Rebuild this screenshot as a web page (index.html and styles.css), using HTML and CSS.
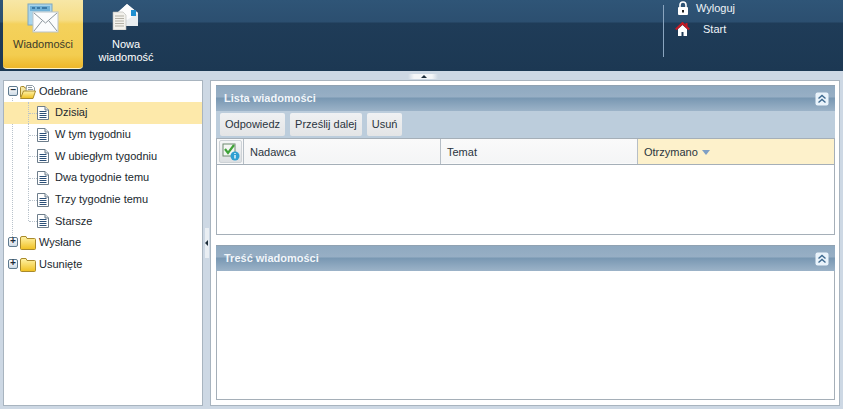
FILE: index.html
```html
<!DOCTYPE html>
<html lang="pl">
<head>
<meta charset="utf-8">
<title>Wiadomości</title>
<link rel="stylesheet" href="styles.css">
</head>
<body>
<svg class="defs" width="0" height="0" aria-hidden="true">
  <defs>
    <linearGradient id="fold" x1="0" y1="0" x2="0" y2="1"><stop offset="0" stop-color="#fff3a8"/><stop offset="1" stop-color="#f0c020"/></linearGradient>
    <symbol id="doc" viewBox="0 0 12 14">
      <path d="M.5.5h7.500l3.500 3.500v9.500h-11z" fill="#fff" stroke="#6d7d8b"/>
      <path d="M8 .5v3.500h3.500" fill="#dfe5e8" stroke="#6d7d8b"/>
      <path d="M2.500 5.500h7M2.500 7.500h7M2.500 9.500h7M2.500 11.500h7" stroke="#2c5078" fill="none"/>
    </symbol>
    <symbol id="folder" viewBox="0 0 16 14">
      <path d="M.5 3V12.500a1 1 0 0 0 1 1h13a1 1 0 0 0 1-1V3.500a1 1 0 0 0-1-1H7L6 .5H2A1.500 1.500 0 0 0 .5 2z" fill="url(#fold)" stroke="#a98a2c"/>
    </symbol>
    <symbol id="folder-open" viewBox="0 0 16 14">
      <path d="M.5 12V2.500a1 1 0 0 1 1-1H4l1 1.500h7.500v3" fill="#f7e7a0" stroke="#a98a2c"/>
      <path d="M6.500 .5h6l2 2v4h-8.500z" fill="#fff" stroke="#8d9aa3"/>
      <path d="M8 2.500h4M8 4.500h5" stroke="#8d9aa3"/>
      <path d="M.5 13.500 3.500 6h12l-2.500 7.500z" fill="url(#fold)" stroke="#a98a2c" stroke-linejoin="round"/>
    </symbol>
    <symbol id="collapse" viewBox="0 0 14 14">
      <rect x=".5" y=".5" width="13" height="13" rx="2" fill="#e9f3fb"/>
      <path d="M3.500 6.500 7 3.500l3.500 3M3.500 10.500 7 7.500l3.500 3" fill="none" stroke="#3f6a8f" stroke-width="1.400"/>
    </symbol>
  </defs>
</svg>

<header class="topbar">
  <nav class="nav">
    <a class="nav-item is-active">
      <svg class="nav-icon" viewBox="0 0 32 30" width="32" height="30">
        <rect x="1" y="1" width="24" height="21" fill="#a9d4ea" stroke="#7fa8bf"/>
        <rect x="3" y="3" width="20" height="5" fill="#6fb0d6"/>
        <path d="M5 5h3M10 5h3M15 5h5" stroke="#3d7aa6" stroke-width="2"/>
        <rect x="6" y="9" width="25" height="20" fill="#fbfcfd" stroke="#b9c3c9"/>
        <path d="M7 10l11.500 10L30 10M7 28l8-10M30 28l-8-10" fill="none" stroke="#8b959c"/>
      </svg>
      <span>Wiadomości</span>
    </a>
    <a class="nav-item">
      <svg class="nav-icon" viewBox="0 0 28 28" width="28" height="28">
        <path d="M5 11 15 2l11 9v13H5z" fill="#e9edef"/>
        <path d="M5 11 15 2l11 9-11 7z" fill="#fdfdfd"/>
        <rect x="19" y="8" width="5" height="6" fill="#1f8fd0"/>
        <path d="M1 10h10l3 3v15H1z" fill="#f2f1ec" stroke="#b5b7b4" stroke-width=".6"/>
        <path d="M3 14h9M3 16.500h9M3 19h9M3 21.500h9M3 24h9" stroke="#b4b1a6"/>
      </svg>
      <span>Nowa<br>wiadomość</span>
    </a>
  </nav>
  <div class="user-links">
    <a class="user-link">
      <svg viewBox="0 0 12 14" width="12" height="14"><path d="M3 6V4a3 3 0 0 1 6 0v2" fill="none" stroke="#fff" stroke-width="1.600"/><rect x="1" y="6" width="10" height="8" rx="1" fill="#fff"/><rect x="5" y="9" width="2" height="2.500" fill="#222"/></svg>
      <span>Wyloguj</span>
    </a>
    <a class="user-link user-link-start">
      <svg viewBox="0 0 15 14" width="15" height="14"><path d="M3 7v7h3.500V10h2v4H12V7L7.500 3z" fill="#fff"/><path d="M.8 7.500 7.500 1.200l6.700 6.300" fill="none" stroke="#c41a24" stroke-width="2.200"/><rect x="10.500" y="1" width="2" height="3.500" fill="#c41a24"/></svg>
      <span>Start</span>
    </a>
  </div>
</header>

<div class="splitter-h"><i class="grip-h"></i></div>

<main class="workspace">
  <aside class="tree">
    <div class="node node-root">
      <b class="toggle">−</b>
      <svg class="ico-folder"><use href="#folder-open"/></svg>
      <span>Odebrane</span>
    </div>
    <ul class="leaves">
      <li class="leaf is-selected"><svg class="ico-doc"><use href="#doc"/></svg><span>Dzisiaj</span></li>
      <li class="leaf"><svg class="ico-doc"><use href="#doc"/></svg><span>W tym tygodniu</span></li>
      <li class="leaf"><svg class="ico-doc"><use href="#doc"/></svg><span>W ubiegłym tygodniu</span></li>
      <li class="leaf"><svg class="ico-doc"><use href="#doc"/></svg><span>Dwa tygodnie temu</span></li>
      <li class="leaf"><svg class="ico-doc"><use href="#doc"/></svg><span>Trzy tygodnie temu</span></li>
      <li class="leaf"><svg class="ico-doc"><use href="#doc"/></svg><span>Starsze</span></li>
    </ul>
    <div class="node">
      <b class="toggle">+</b>
      <svg class="ico-folder"><use href="#folder"/></svg>
      <span>Wysłane</span>
    </div>
    <div class="node">
      <b class="toggle">+</b>
      <svg class="ico-folder"><use href="#folder"/></svg>
      <span>Usunięte</span>
    </div>
  </aside>

  <div class="splitter-v"><i class="grip-v"></i></div>

  <section class="content">
    <article class="panel panel-list">
      <header class="panel-head">
        <h2>Lista wiadomości</h2>
        <svg class="collapse"><use href="#collapse"/></svg>
      </header>
      <div class="toolbar">
        <button class="btn">Odpowiedz</button>
        <button class="btn">Prześlij dalej</button>
        <button class="btn">Usuń</button>
      </div>
      <div class="grid-head">
        <div class="col col-check">
          <span class="check-box">
            <svg viewBox="0 0 18 18" width="18" height="18"><rect x="1" y="1" width="12" height="12" fill="#f3f6f3" stroke="#6f8a70"/><path d="M3 6l3 4 6-8" fill="none" stroke="#3fa238" stroke-width="2.200"/><circle cx="13" cy="13" r="4.500" fill="#2f9fd2"/><path d="M13 12v3.500M13 10v1" stroke="#fff" stroke-width="1.300"/></svg>
          </span>
        </div>
        <div class="col col-wide">Nadawca</div>
        <div class="col col-wide">Temat</div>
        <div class="col col-wide col-sorted">Otrzymano <i class="sort-arrow"></i></div>
      </div>
      <div class="panel-body"></div>
    </article>
    <article class="panel panel-read">
      <header class="panel-head">
        <h2>Treść wiadomości</h2>
        <svg class="collapse"><use href="#collapse"/></svg>
      </header>
      <div class="panel-body"></div>
    </article>
  </section>
</main>
</body>
</html>
```

FILE: styles.css
```css
* { box-sizing: border-box; }
html, body { height: 100%; }
body {
  margin: 0;
  width: 843px;
  height: 409px;
  overflow: hidden;
  background: #cdd8e4;
  color: #1e2a33;
  font: 11px/13px "Liberation Sans", Arial, sans-serif;
  display: flex;
  flex-direction: column;
}
.defs { position: absolute; }
ul { list-style: none; margin: 0; padding: 0; }

.topbar {
  height: 71px;
  flex: none;
  display: flex;
  background: linear-gradient(#2f5577 0, #2c4f70 22px, #1f3c58 23px, #1c3853 100%);
  color: #fff;
}
.nav { display: flex; padding-left: 3px; }
.nav-item {
  width: 80px;
  height: 69px;
  display: flex;
  flex-direction: column;
  align-items: center;
  text-align: center;
  line-height: 13px;
}
.nav-item + .nav-item { margin-left: 2px; padding-top: 2px; width: 82px; }
.nav-item + .nav-item span { margin-top: 8px; }
.nav-item.is-active {
  background: linear-gradient(#f7e7a6 0, #f6dd85 20px, #f4d15c 24px, #f3cd50 55px, #edb72a 100%);
  color: #3a3a2a;
  border-radius: 0 0 4px 4px;
  border-bottom: 1px solid #fff3c8;
  padding-top: 3px;
}
.nav-item.is-active span { margin-top: 5px; }

.user-links {
  margin-left: 496px;
  height: 52px;
  margin-top: 5px;
  padding-left: 13px;
  border-left: 1px solid #8aa5bf;
  display: flex;
  flex-direction: column;
}
.user-link { display: flex; align-items: center; height: 20px; margin-top: -7px; color: #eef3f7; }
.user-link + .user-link { margin-top: 1px; }
.user-link span { margin-left: 7px; }
.user-link-start { margin-left: -2px; }
.user-link-start span { margin-left: 13px; }
.user-link svg { flex: none; }

.splitter-h { height: 9px; flex: none; display: flex; justify-content: center; padding-left: 2px; }
.grip-h {
  display: block;
  width: 30px;
  height: 5px;
  margin-top: 3px;
  background: linear-gradient(90deg, #cdd8e4, #f4f6f8 20%, #f4f6f8 80%, #cdd8e4);
  position: relative;
}
.grip-h::after {
  content: "";
  position: absolute;
  left: 13px;
  top: 1px;
  border: 3px solid transparent;
  border-top: 0;
  border-bottom: 3px solid #1d2d3a;
}

.workspace { flex: none; height: 326px; display: flex; padding-left: 3px; }

.tree {
  width: 200px;
  background: #fff;
  border: 1px solid #a8b4bf;
  color: #20282e;
}
.node {
  height: 21.7px;
  display: flex;
  align-items: center;
  padding-left: 4px;
  position: relative;
}
.node-root { height: 21px; }
.toggle {
  width: 10px;
  height: 10px;
  border: 1px solid #5f7a8f;
  background: linear-gradient(#fff, #cfdbe6);
  font: 700 10px/7px "Liberation Mono", monospace;
  text-align: center;
  color: #1d2d3a;
  flex: none;
  border-radius: 2px;
  margin-top: -2px;
}
.ico-folder { width: 16px; height: 14px; margin-left: 2px; flex: none; }
.node span { margin-left: 3px; }

.leaves { position: relative; }
.leaves::before {
  content: "";
  position: absolute;
  left: 8px;
  top: -4px;
  bottom: -13px;
  border-left: 1px dotted #b9c3cc;
}
.leaf {
  height: 21.7px;
  display: flex;
  align-items: center;
  padding-left: 33px;
  position: relative;
}
.leaf::before {
  content: "";
  position: absolute;
  left: 24px;
  top: 0;
  bottom: 0;
  border-left: 1px dotted #b9c3cc;
}
.leaf:last-child::before { bottom: 50%; }
.leaf::after {
  content: "";
  position: absolute;
  left: 25px;
  width: 8px;
  top: 50%;
  border-top: 1px dotted #b9c3cc;
}
.leaf.is-selected { background: #fde9aa; }
.ico-doc { width: 12px; height: 14px; flex: none; }
.leaf span { margin-left: 6px; }

.splitter-v { width: 7px; flex: none; display: flex; align-items: center; justify-content: center; }
.grip-v {
  display: block;
  width: 4px;
  height: 30px;
  background: #e9eef3;
  position: relative;
}
.grip-v::after {
  content: "";
  position: absolute;
  left: 0;
  top: 12px;
  border: 3px solid transparent;
  border-left: 0;
  border-right: 3px solid #1d2d3a;
}

.content {
  width: 630px;
  background: #fff;
  border: 1px solid #a8b4bf;
  padding: 4px 4px 5px 5px;
  display: flex;
  flex-direction: column;
  gap: 10px;
}
.panel {
  display: flex;
  flex-direction: column;
  min-height: 0;
}
.panel-list { height: 150px; flex: none; }
.panel-read { flex: 1; }
.panel-head {
  height: 26px;
  flex: none;
  display: flex;
  align-items: center;
  justify-content: space-between;
  padding: 0 6px 0 8px;
  background: linear-gradient(#8fa9c0 0, #97afc5 11px, #7897b2 12px, #9cb3c8 100%);
  border-top: 1px solid #90a2b2;
}
.panel-head h2 {
  margin: 0;
  font: 700 11px/13px "Liberation Sans", Arial, sans-serif;
  color: #f2f6fa;
}
.collapse { width: 14px; height: 14px; }
.toolbar {
  height: 27px;
  flex: none;
  display: flex;
  gap: 5px;
  padding: 2px 3px 0 4px;
  background: #bccddc;
}
.btn {
  height: 23px;
  padding: 0 5px;
  border: 0;
  border-radius: 2px;
  background: linear-gradient(#eff1f3, #e4e5e6);
  color: #2a3540;
  font: 11px/13px "Liberation Sans", Arial, sans-serif;
}
.grid-head {
  height: 27px;
  flex: none;
  display: flex;
  background: linear-gradient(#fafafa 0, #f4f5f6 24px, #fff 25px);
  border: 1px solid #a5afb8;
  color: #2a3540;
}
.col {
  display: flex;
  align-items: center;
  padding: 1px 6px 0;
  border-right: 1px solid #b6bec6;
}
.col-check { width: 27px; flex: none; padding: 0 1px 0 2px; }
.check-box {
  width: 23px;
  height: 23px;
  display: flex;
  align-items: center;
  justify-content: center;
  background: linear-gradient(#f4f5f6, #dcdfe2);
  border: 1px solid #cdd2d6;
  border-radius: 2px;
}
.col-wide { width: 197px; flex: none; }
.col-sorted { flex: 1; border-right: 0; background: #fdf1cb; }
.sort-arrow {
  display: inline-block;
  margin-left: 4px;
  border: 4px solid transparent;
  border-bottom: 0;
  border-top: 5px solid #7f9fc4;
}
.panel-body {
  flex: 1;
  background: #fff;
  border: 1px solid #a5afb8;
  border-top: 0;
}
```
